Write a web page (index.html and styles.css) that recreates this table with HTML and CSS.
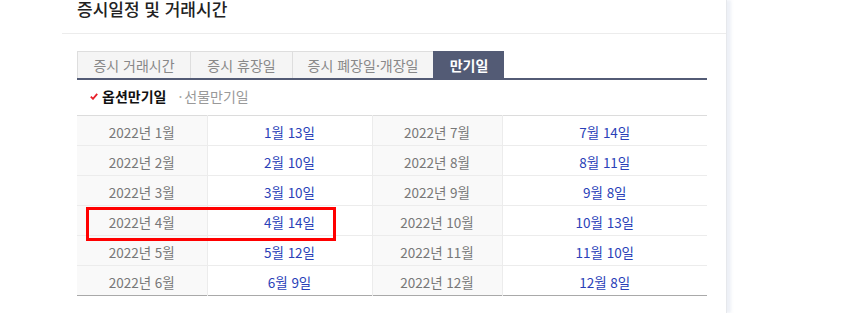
FILE: index.html
```html
<!DOCTYPE html>
<html lang="ko">
<head>
<meta charset="utf-8">
<title>증시일정 및 거래시간</title>
<link rel="stylesheet" href="styles.css">
</head>
<body>
<div class="page">
  <div class="header">
    <h2 class="title">증시일정 및 거래시간</h2>
  </div>
  <div class="content">
    <ul class="tabs">
      <li class="tab">증시 거래시간</li>
      <li class="tab">증시 휴장일</li>
      <li class="tab">증시 폐장일·개장일</li>
      <li class="tab tab-active">만기일</li>
    </ul>
    <div class="subtabs">
      <span class="subtab subtab-on"><svg class="check" width="8" height="7" viewBox="0 0 8 7"><path d="M0.8 3.6 L3 5.8 L7.2 0.8" fill="none" stroke="#e8202a" stroke-width="1.8"/></svg>옵션만기일</span>
      <span class="subtab"><span class="dot">·</span>선물만기일</span>
    </div>
    <div class="table-wrap">
      <table class="expiry">
        <colgroup>
          <col class="c-month"><col class="c-date"><col class="c-month"><col class="c-date2">
        </colgroup>
        <tbody>
          <tr><th>2022년 1월</th><td>1월 13일</td><th>2022년 7월</th><td>7월 14일</td></tr>
          <tr><th>2022년 2월</th><td>2월 10일</td><th>2022년 8월</th><td>8월 11일</td></tr>
          <tr><th>2022년 3월</th><td>3월 10일</td><th>2022년 9월</th><td>9월 8일</td></tr>
          <tr><th>2022년 4월</th><td>4월 14일</td><th>2022년 10월</th><td>10월 13일</td></tr>
          <tr><th>2022년 5월</th><td>5월 12일</td><th>2022년 11월</th><td>11월 10일</td></tr>
          <tr><th>2022년 6월</th><td>6월 9일</td><th>2022년 12월</th><td>12월 8일</td></tr>
        </tbody>
      </table>
      <div class="highlight"></div>
    </div>
  </div>
</div>
</body>
</html>
```
FILE: styles.css
```css
html, body {
  margin: 0;
  padding: 0;
  background: #fff;
}
body {
  font-family: "Noto Sans CJK KR", "Noto Sans", sans-serif;
  width: 844px;
  height: 313px;
  overflow: hidden;
}
.page {
  width: 727px;
  height: 313px;
  border-right: 1px solid #e6e8ec;
  box-shadow: 4px 0 3px rgba(215, 222, 235, 0.45);
  box-sizing: border-box;
}
.header {
  margin-left: 62px;
  height: 33px;
  border-bottom: 1px solid #ececec;
  padding-left: 15px;
}
.title {
  margin: 0;
  font-size: 17px;
  font-weight: 500;
  line-height: 17px;
  color: #222;
}
.content {
  padding: 17px 0 0 77px;
  width: 630px;
}
.tabs {
  list-style: none;
  margin: 0;
  padding: 0;
  display: flex;
  border-bottom: 2px solid #535b75;
}
.tab {
  height: 27px;
  line-height: 26px;
  font-size: 14px;
  color: #888;
  background: #f5f5f5;
  border: 1px solid #dedede;
  border-bottom: 0;
  border-right: 0;
  box-sizing: border-box;
  text-align: center;
}
.tab:nth-child(1) { width: 113px; }
.tab:nth-child(2) { width: 102px; }
.tab:nth-child(3) { width: 141px; }
.tab-active {
  width: 71px;
  background: #535b75;
  border-color: #535b75;
  color: #fff;
  font-weight: 700;
}
.subtabs {
  display: flex;
  align-items: center;
  gap: 12px;
  height: 35px;
  padding-left: 13px;
  padding-bottom: 3px;
  box-sizing: border-box;
  font-size: 14px;
  line-height: 18px;
}
.subtab {
  display: flex;
  align-items: center;
  color: #999;
}
.subtab-on {
  color: #111;
  font-weight: 700;
}
.check {
  margin-right: 4px;
  margin-top: 0;
}
.dot {
  margin-right: 2px;
  color: #aaa;
}
.table-wrap {
  position: relative;
}
.expiry {
  width: 630px;
  border-collapse: collapse;
  table-layout: fixed;
  border-top: 1px solid #dcdcdc;
  border-bottom: 1px solid #a9a9a9;
  font-size: 13.5px;
}
.c-month { width: 130px; }
.c-date { width: 165px; }
.c-date2 { width: 205px; }
.expiry th, .expiry td {
  height: 30px;
  padding: 2px 0 0;
  box-sizing: border-box;
  line-height: 18px;
  text-align: center;
  border-bottom: 1px solid #ececec;
  border-left: 1px solid #ececec;
}
.expiry tr:last-child th, .expiry tr:last-child td {
  border-bottom: 0;
}
.expiry th {
  font-weight: 400;
  color: #777;
  background: #f9f9f9;
}
.expiry th:first-child {
  border-left: 0;
}
.expiry td {
  color: #2a3fb8;
  background: #fff;
}
.highlight {
  position: absolute;
  left: 9px;
  top: 92px;
  width: 250px;
  height: 34px;
  border: 3px solid #f00;
  box-sizing: border-box;
  pointer-events: none;
}
```
